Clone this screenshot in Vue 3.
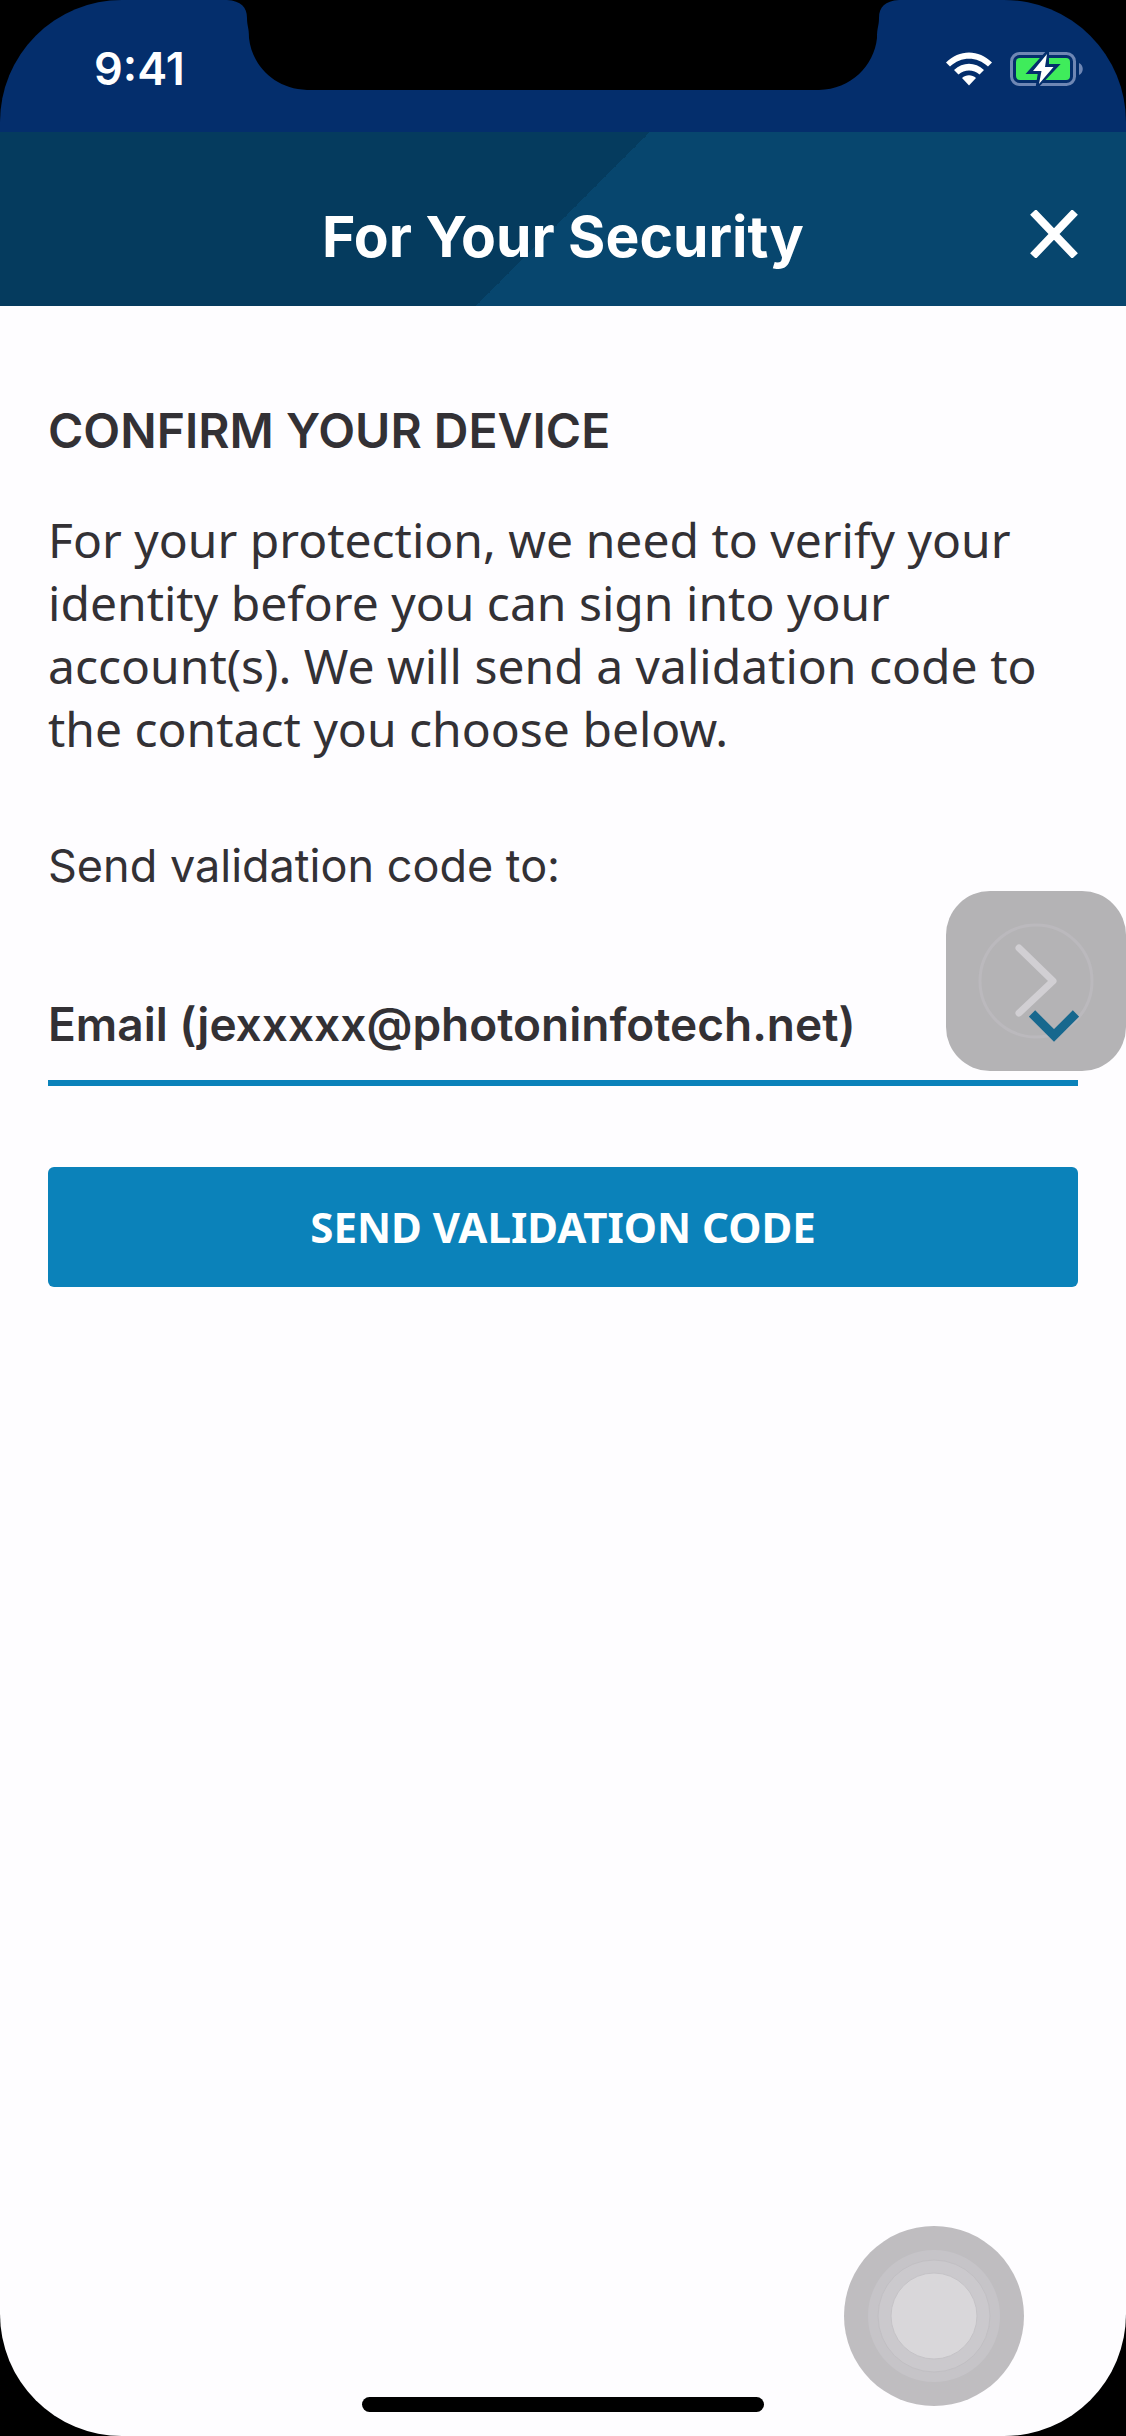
<script setup>
import { ref } from 'vue'

const contacts = ['Email (jexxxxx@photoninfotech.net)']
const contact = ref(contacts[0])
</script>

<template>
  <div class="screen">
    <div class="status-bar">
      <svg class="notch" viewBox="0 0 672 90" aria-hidden="true">
        <path d="M0 0C14 1 20 7 20 18C20 26 22 27 22 38C25 66 48 89 80 90H592C624 89 647 66 650 38C650 27 652 26 652 18C652 7 658 1 672 0Z" />
      </svg>
      <span class="time">9:41</span>
      <div class="indicators">
        <svg class="wifi" viewBox="0 0 46 34" aria-hidden="true">
          <path d="M0 10.500C13-3 33-3 46 10.500L42 14.500C31 4 15 4 4 14.500Z" />
          <path d="M8 18C17 9.500 29 9.500 38 18L33.500 22.500C27.500 17 18.500 17 12.500 22.500Z" />
          <path d="M16 26C20 22.300 26 22.300 30 26L23 33.500Z" />
        </svg>
        <svg class="battery" viewBox="0 0 74 36" aria-hidden="true">
          <rect x="1.500" y="2.500" width="63" height="31" rx="8" fill="none" stroke="#6f87b4" stroke-width="3" />
          <path d="M69 12C74 14 74 22 69 24Z" fill="#6f87b4" />
          <rect x="6" y="7" width="54" height="22" rx="4" fill="#3fec5b" />
          <path d="M37 2L20 21H30L28 34L46 15H37Z" fill="#042e6c" stroke="#042e6c" stroke-width="4" />
          <path d="M37 3L23 20H31.500L29 33L43.500 16H35Z" fill="#fff" />
        </svg>
      </div>
    </div>

    <header class="header">
      <h1 class="title">For Your Security</h1>
      <button class="close" type="button" aria-label="Close">
        <svg viewBox="0 0 48 48" aria-hidden="true">
          <path d="M3 2L45 46M45 2L3 46" fill="none" stroke="#fff" stroke-width="8" />
        </svg>
      </button>
    </header>

    <main class="content">
      <h2 class="heading">CONFIRM YOUR DEVICE</h2>
      <p class="copy">
        For your protection, we need to verify your identity before you can sign into your
        account(s). We will send a validation code to the contact you choose below.
      </p>
      <label class="label" for="contact">Send validation code to:</label>
      <div class="field">
        <select id="contact" v-model="contact" class="select">
          <option v-for="item in contacts" :key="item" :value="item">{{ item }}</option>
        </select>
        <button class="floating" type="button" aria-label="Next">
          <svg viewBox="0 0 180 180" aria-hidden="true">
            <circle cx="90" cy="90" r="56" fill="none" stroke="#bbb9bd" stroke-width="3" />
            <path d="M73 57L107 90L73 122" fill="none" stroke="#d1cfd3" stroke-width="7" stroke-linecap="round" stroke-linejoin="round" />
          </svg>
        </button>
        <svg class="chevron" viewBox="0 0 50 32" aria-hidden="true">
          <path d="M3 3.500L25 25.500L47 3.500" fill="none" stroke="#17688e" stroke-width="9" />
        </svg>
      </div>
      <button class="submit" type="button">SEND VALIDATION CODE</button>
    </main>

    <svg class="touch" viewBox="0 0 180 180" aria-hidden="true">
      <circle cx="90" cy="90" r="90" fill="#bfbdc0" />
      <circle cx="90" cy="90" r="66" fill="#c6c4c8" />
      <circle cx="90" cy="90" r="56" fill="#cbc9cd" stroke="#c1bfc3" />
      <circle cx="90" cy="90" r="43" fill="#d9d7da" stroke="#c5c3c7" />
    </svg>
    <footer class="home"><span class="home-bar"></span></footer>
  </div>
</template>

<style>
body {
  margin: 0;
  background: #000;
}
</style>

<style scoped>
.screen {
  position: relative;
  display: flex;
  flex-direction: column;
  min-height: 100vh;
  overflow: hidden;
  border-radius: 0 0 122px 122px;
  background: #fefdff;
  color: #333135;
  font-family: Inter, "Noto Sans", sans-serif;
}

.screen * {
  box-sizing: border-box;
}

.status-bar {
  position: relative;
  display: flex;
  align-items: center;
  justify-content: space-between;
  height: 132px;
  padding: 6px 42px 0 94px;
  border-radius: 122px 122px 0 0;
  background: #042e6c;
  box-shadow: 0 -122px 0 122px #000;
}

.notch {
  position: absolute;
  top: 0;
  left: 50%;
  width: 672px;
  margin-left: -336px;
}

.time {
  color: #fff;
  font-size: 45px;
  font-weight: 600;
  line-height: 56px;
}

.indicators {
  display: flex;
  align-items: center;
  gap: 18px;
}

.wifi {
  width: 46px;
  fill: #fff;
}

.battery {
  width: 74px;
}

.header {
  position: relative;
  display: flex;
  align-items: center;
  justify-content: center;
  height: 174px;
  padding: 36px 48px 0;
  background: linear-gradient(135deg, #053b5e 50%, #07466e 50%);
}

.title {
  margin: 0;
  color: #fff;
  font-size: 57px;
  font-weight: 700;
  line-height: 72px;
}

.close {
  position: absolute;
  top: 78px;
  right: 48px;
  width: 48px;
  height: 48px;
  padding: 0;
  border: 0;
  background: none;
}

.close svg,
.floating svg {
  display: block;
  width: 100%;
}

.content {
  display: flex;
  flex: 1;
  flex-direction: column;
  padding: 95px 48px 0;
}

.heading {
  margin: 0;
  font-size: 48px;
  font-weight: 600;
  line-height: 60px;
}

.copy {
  margin: 47px 0 0;
  font-family: "Noto Sans", sans-serif;
  font-size: 48px;
  line-height: 63px;
}

.label {
  margin-top: 76px;
  font-size: 45px;
  line-height: 60px;
}

.field {
  position: relative;
  margin-top: 80px;
  border-bottom: 6px solid #0b82ba;
}

.select {
  display: block;
  width: 100%;
  height: 104px;
  padding: 0 0 8px;
  border: 0;
  appearance: none;
  background: none;
  color: inherit;
  font: 600 46px/60px Inter, sans-serif;
}

.floating {
  position: absolute;
  right: -48px;
  bottom: 9px;
  width: 180px;
  height: 180px;
  padding: 0;
  border: 0;
  border-radius: 44px;
  background: #b4b3b5;
}

.chevron {
  position: absolute;
  right: -1px;
  bottom: 38px;
  width: 50px;
  pointer-events: none;
}

.submit {
  height: 120px;
  margin-top: 81px;
  border: 0;
  border-radius: 6px;
  background: #0b82ba;
  color: #fff;
  font: 700 42px/60px "Noto Sans", sans-serif;
}

.touch {
  position: absolute;
  right: 102px;
  bottom: 30px;
  width: 180px;
}

.home {
  display: flex;
  justify-content: center;
  padding-bottom: 24px;
}

.home-bar {
  width: 402px;
  height: 15px;
  border-radius: 8px;
  background: #000;
}
</style>
